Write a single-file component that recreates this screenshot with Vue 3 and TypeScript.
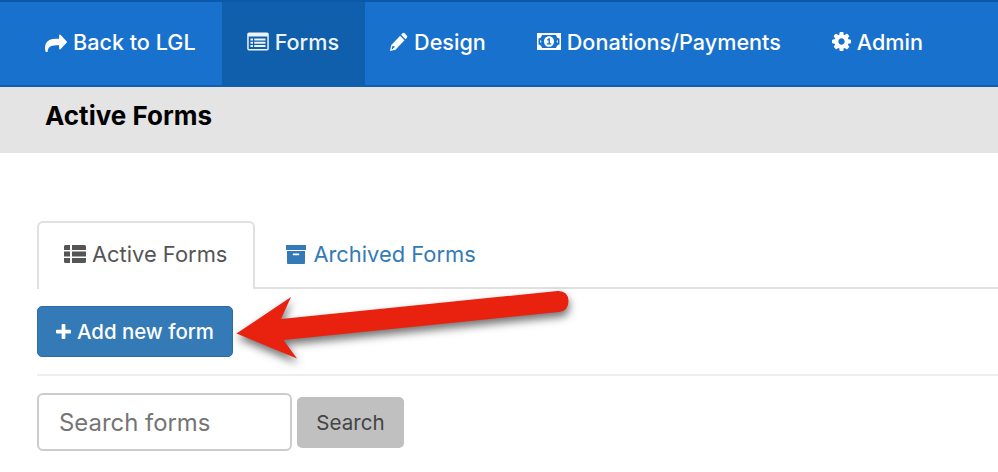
<template>
  <div class="page">
    <nav class="topnav">
      <a v-for="item in navItems" :key="item.label" class="nav_item" :class="{ nav_active: item.active }">
        <svg v-if="item.icon === 'share'" class="nav_icon" width="22" height="20" viewBox="0 0 1792 1536" preserveAspectRatio="none">
          <path transform="translate(0 1408) scale(1 -1)" fill="currentColor" d="M1792 640q0 26-19 45l-512 512q-19 19-45 19t-45-19-19-45v-256h-224q-713 0-875-403-53-134-53-333 0-166 127-451 3-7 10.5-24t13.5-30 13-22q12-17 28-17 15 0 23.5 10t8.5 25q0 9-2.5 26.5t-2.5 23.5q-5 68-5 123 0 101 17.5 181t48.5 138.5 80 101 105.5 69.5 133 42.5 154 21.5 175.5 6h224v-256q0-26 19-45t45-19 45 19l512 512q19 19 19 45z" />
        </svg>
        <svg v-else-if="item.icon === 'list'" class="nav_icon" width="22" height="19" viewBox="0 0 22 19">
          <path fill="currentColor" fill-rule="evenodd" d="M2 .5h18A1.8 1.8 0 0 1 21.8 2.3v14.4A1.8 1.8 0 0 1 20 18.500H2A1.800 1.800 0 0 1 .2 16.700V2.300A1.800 1.800 0 0 1 2 .5zM1.700 4.500v12.200q0 .3.3.3h18q.3 0 .3-.3V4.500zM3.500 6.500h2.500v2H3.500zM7.200 6.500h11.300v2H7.200zM3.500 9.800h2.500v2H3.500zM7.200 9.800h11.300v2H7.200zM3.500 13h2.500v2H3.500zM7.200 13h11.300v2H7.200z" />
        </svg>
        <svg v-else-if="item.icon === 'pencil'" class="nav_icon" width="18" height="19" viewBox="0 0 19 19" preserveAspectRatio="none">
          <path fill="currentColor" d="M13.200 1.200q1-1 2-.1l2.700 2.700q.9 1 -.1 2l-1.500 1.500-4.600-4.600zM10.700 3.700l4.600 4.600-9.500 9.500L0 19l1.200-5.800zM2.400 14.300l-.7 3 1.400-.3.500-1.200 1.300-.4-.3-1.500z" />
        </svg>
        <svg v-else-if="item.icon === 'money'" class="nav_icon" width="24" height="17" viewBox="0 0 24 17">
          <path fill="currentColor" fill-rule="evenodd" d="M0 0h24v17H0zM1.500 5.500v6q2.500 0 3.500 3.500h14q1-3.500 3.500-3.500v-6q-2.500 0-3.500-3.500H5q-1 3.500-3.500 3.500zM12 3.200c3 0 5 2.400 5 5.300s-2 5.300-5 5.300-5-2.400-5-5.300 2-5.300 5-5.300zM9.800 11.600h4.500v-1.300h-1.400V5.300h-1.300l-1.700 1.500.8 1 .8-.6v3.100H9.800zM3.200 6.800l1.300 1.700-1.300 1.700zM20.800 6.800l-1.300 1.700 1.300 1.700z" />
        </svg>
        <svg v-else class="nav_icon" width="19" height="19" viewBox="128 128 1536 1536">
          <path fill="currentColor" d="M1152 896q0-106-75-181t-181-75-181 75-75 181 75 181 181 75 181-75 75-181zm512-109v222q0 12-8 23t-20 13l-185 28q-19 54-39 91 35 50 107 138 10 12 10 25t-9 23q-27 37-99 108t-94 71q-12 0-26-9l-138-108q-44 23-91 38-16 136-29 186-7 28-36 28h-222q-14 0-24.500-8.500t-11.500-21.500l-28-184q-49-16-90-37l-141 107q-10 9-25 9-14 0-25-11-126-114-165-168-7-10-7-23 0-12 8-23 15-21 51-66.500t54-70.500q-27-50-41-99l-183-27q-13-2-21-12.500t-8-23.500v-222q0-12 8-23t19-13l186-28q14-46 39-92-40-57-107-138-10-12-10-24 0-10 9-23 26-36 98.500-107.500t94.500-71.500q13 0 26 10l138 107q44-23 91-38 16-136 29-186 7-28 36-28h222q14 0 24.500 8.500t11.500 21.500l28 184q49 16 90 37l142-107q9-9 24-9 13 0 25 10 129 119 165 170 7 8 7 22 0 12-8 23-15 21-51 66.500t-54 70.500q26 50 41 98l183 28q13 2 21 12.500t8 23.500z" />
        </svg>
        {{ item.label }}
      </a>
    </nav>

    <header class="subhead">
      <h1>Active Forms</h1>
    </header>

    <main class="content">
      <div class="tabs">
        <a class="tab tab_active">
          <svg width="22" height="18" viewBox="0 0 22 18">
            <path fill="currentColor" d="M1.500 0H6v5H0V1.500A1.500 1.500 0 0 1 1.500 0zM8 0h12.500A1.500 1.500 0 0 1 22 1.500V5H8zM0 6.500h6v5H0zM8 6.500h14v5H8zM0 13h6v5H1.500A1.500 1.500 0 0 1 0 16.500zM8 13h14v3.500a1.500 1.500 0 0 1-1.500 1.500H8z" />
          </svg>
          Active Forms
        </a>
        <a class="tab tab_link">
          <svg width="20" height="19" viewBox="0 0 20 19">
            <path fill="currentColor" fill-rule="evenodd" d="M0 0h20v5H0zM1 6h18v12a1 1 0 0 1-1 1H2a1 1 0 0 1-1-1zM7.500 8.500a.8.8 0 0 0 0 1.700h5a.8.8 0 0 0 0-1.700z" />
          </svg>
          Archived Forms
        </a>
      </div>

      <div class="add_row">
        <button class="btn_add">
          <svg width="15" height="15" viewBox="0 0 16 16">
            <path fill="currentColor" d="M6 1a1 1 0 0 1 1-1h2a1 1 0 0 1 1 1v5h5a1 1 0 0 1 1 1v2a1 1 0 0 1-1 1h-5v5a1 1 0 0 1-1 1H7a1 1 0 0 1-1-1v-5H1a1 1 0 0 1-1-1V7a1 1 0 0 1 1-1h5z" />
          </svg>
          Add new form
        </button>
      </div>

      <hr class="divider" />

      <div class="search_row">
        <input class="search_input" type="text" placeholder="Search forms" />
        <button class="btn_search">Search</button>
      </div>
    </main>

    <svg class="arrow" width="998" height="472" viewBox="0 0 998 472">
      <path fill="#e9220f" d="M236.500 333.500 291 297 281 319 557.500 291Q568 290.500 568.500 301 568.500 311 559 312L283.500 340 297 358.500z" />
    </svg>
  </div>
</template>

<script setup lang="ts">
const navItems = [
  { label: 'Back to LGL', icon: 'share', active: false },
  { label: 'Forms', icon: 'list', active: true },
  { label: 'Design', icon: 'pencil', active: false },
  { label: 'Donations/Payments', icon: 'money', active: false },
  { label: 'Admin', icon: 'cog', active: false },
]
</script>

<style scoped>
.page {
  position: relative;
  width: 998px;
  height: 472px;
  overflow: hidden;
  background: #fff;
  font-family: Inter, "Liberation Sans", sans-serif;
}

.topnav {
  display: flex;
  height: 87px;
  box-sizing: border-box;
  padding-left: 20px;
  background: #1871cd;
  border-top: 2px solid #0b58ab;
  border-bottom: 2px solid #0f5fad;
}

.nav_item {
  display: flex;
  align-items: center;
  gap: 6px;
  padding: 0 26px 4px 25px;
  color: #fff;
  font-size: 21.6px;
  font-weight: 500;
  white-space: nowrap;
}

.nav_active {
  background: #0f5fad;
  color: #eef3f9;
}

.subhead {
  display: flex;
  align-items: flex-start;
  height: 66px;
  box-sizing: border-box;
  padding: 13px 45px 0;
  background: #e4e4e4;
}

.subhead h1 {
  margin: 0;
  color: #000;
  font-size: 26px;
  line-height: 32px;
  font-weight: 700;
}

.content {
  padding: 68px 0 0 37px;
}

.tabs {
  display: flex;
  height: 68px;
  box-sizing: border-box;
  border-bottom: 2px solid #e0e0e0;
}

.tab {
  display: flex;
  align-items: center;
  gap: 6px;
  height: 68px;
  box-sizing: border-box;
  padding: 0 26px 4px 25px;
  font-size: 21.9px;
  font-weight: 400;
  white-space: nowrap;
}

.tab_active {
  padding-right: 26px;
  color: #555;
  background: #fff;
  border: 2px solid #e0e0e0;
  border-bottom: 0;
  border-radius: 6px 6px 0 0;
}

.tab_link {
  gap: 7px;
  padding: 0 4px 2px 31px;
  color: #337ab7;
}

.add_row {
  padding-top: 17px;
}

.btn_add {
  display: flex;
  align-items: center;
  gap: 6px;
  width: 196px;
  height: 51px;
  box-sizing: border-box;
  padding: 0 18px;
  color: #fff;
  background: #337ab7;
  border: 1px solid #2e6da4;
  border-radius: 5px;
  font: 500 20.4px Inter, "Liberation Sans", sans-serif;
  white-space: nowrap;
}

.divider {
  height: 2px;
  margin: 17px 0 17px;
  background: #eee;
  border: 0;
}

.search_row {
  display: flex;
  align-items: center;
  gap: 5px;
}

.search_input {
  width: 255px;
  height: 58px;
  box-sizing: border-box;
  padding: 0 20px;
  border: 2px solid #ccc;
  border-radius: 6px;
  color: #555;
  font: 400 23.9px Inter, "Liberation Sans", sans-serif;
}

.search_input::placeholder {
  color: #757575;
  opacity: 1;
}

.btn_search {
  width: 107px;
  height: 51px;
  color: #444;
  background: #c0c0c0;
  border: 0;
  border-radius: 5px;
  font: 400 20.6px Inter, "Liberation Sans", sans-serif;
}

.arrow {
  position: absolute;
  top: 0;
  left: 0;
  pointer-events: none;
  filter: drop-shadow(1px 5px 4px rgba(0, 0, 0, 0.55));
}
</style>
